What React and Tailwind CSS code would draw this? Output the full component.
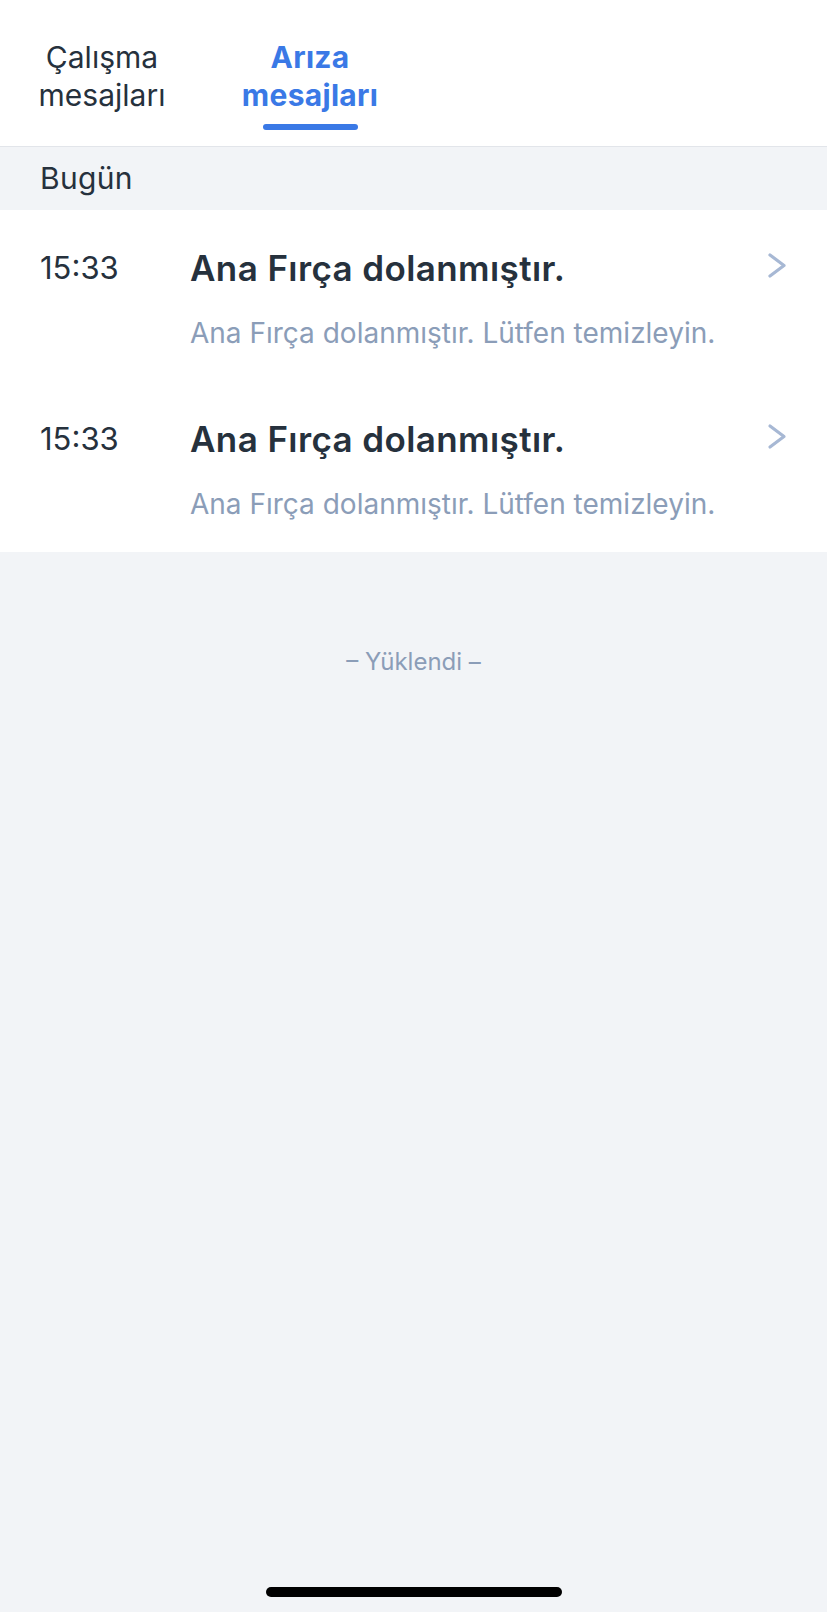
import React from 'react';

const messages = [
  { time: '15:33', title: 'Ana Fırça dolanmıştır.', body: 'Ana Fırça dolanmıştır. Lütfen temizleyin.' },
  { time: '15:33', title: 'Ana Fırça dolanmıştır.', body: 'Ana Fırça dolanmıştır. Lütfen temizleyin.' },
];

const Chevron = () => (
  <svg width="20" height="28" viewBox="0 0 20 28" fill="none" className="shrink-0 -mt-[4px]">
    <polyline points="3,3 17,13.5 3,24" stroke="#a7b8d4" strokeWidth="3.2" strokeLinecap="round" strokeLinejoin="round" />
  </svg>
);

const App = () => {
  return (
    <div
      className="min-h-[1612px] w-full flex flex-col bg-[#f2f4f7] text-[#26313d]"
      style={{ fontFamily: 'Inter, "Liberation Sans", sans-serif' }}
    >
      {/* Tabs */}
      <div className="bg-white border-b border-[#e2e5ea] flex pt-[38px] pb-[16px]">
        <div className="w-[204px] flex flex-col items-center">
          <span className="text-[30px] leading-[38px] text-center text-[#26313d]">
            Çalışma
            <br />
            mesajları
          </span>
        </div>
        <div className="w-[212px] flex flex-col items-center">
          <span className="text-[30px] leading-[38px] font-bold tracking-[0.3px] text-center text-[#3a79e6]">
            Arıza
            <br />
            mesajları
          </span>
          <span className="mt-[10px] h-[6px] w-[95px] rounded-full bg-[#3a79e6]"></span>
        </div>
      </div>

      {/* Day header */}
      <div className="h-[63px] flex items-center px-[40px]">
        <span className="text-[30px] tracking-[0.3px]">Bugün</span>
      </div>

      {/* Messages */}
      <div className="bg-white">
        {messages.map((m, i) => (
          <div key={i} className="flex pl-[40px] pr-[40px] pt-[37px] pb-[30px] h-[171px]">
            <div className="w-[150px] shrink-0 text-[31px] leading-[42px] text-[#26313d]">{m.time}</div>
            <div className="flex-1 flex flex-col">
              <div className="flex items-center justify-between">
                <span className="text-[35px] leading-[42px] font-semibold tracking-[0.4px] text-[#26313d]">{m.title}</span>
                <Chevron />
              </div>
              <span className="mt-[26px] text-[28px] leading-[36px] text-[#8b9db8]">{m.body}</span>
            </div>
          </div>
        ))}
      </div>

      <div className="mt-[95px] text-center text-[24px] leading-[30px] text-[#8b9db8]">– Yüklendi –</div>

      <div className="flex-1"></div>
      <div className="flex justify-center mb-[15px]">
        <span className="h-[10px] w-[296px] rounded-full bg-black"></span>
      </div>
    </div>
  );
};

export default App;
